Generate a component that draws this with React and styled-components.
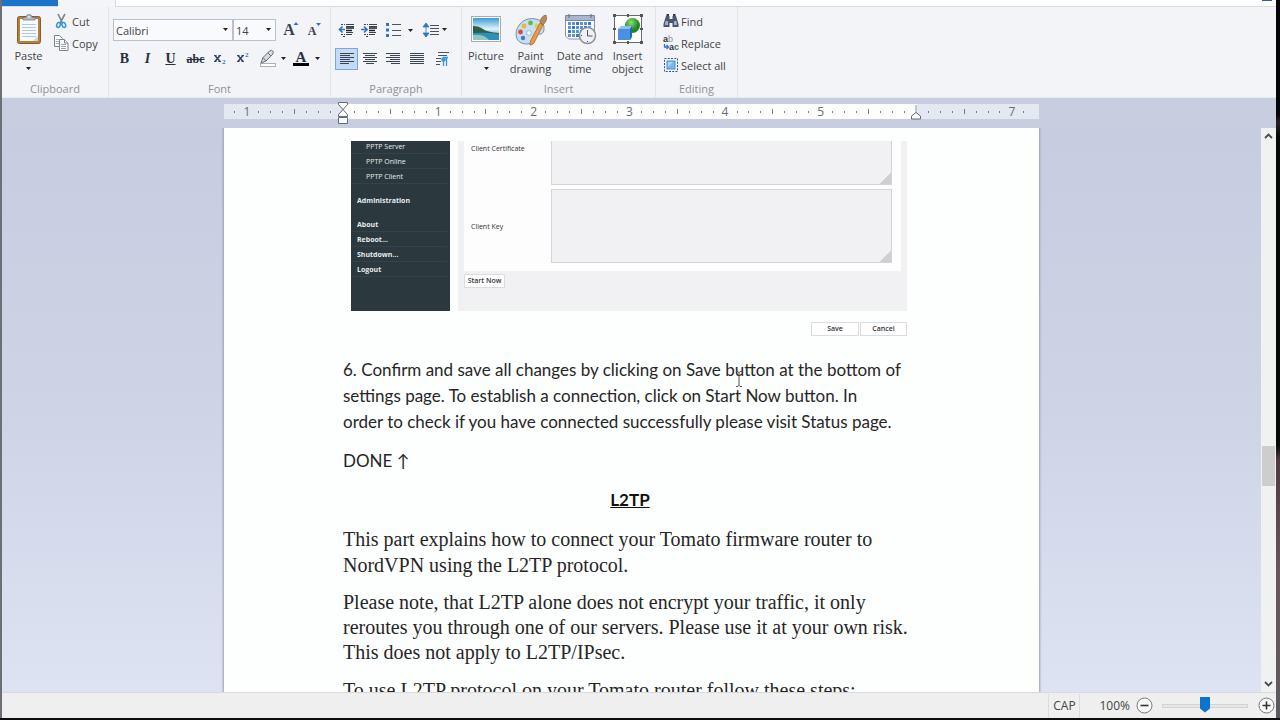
import React from "react";
import styled, { createGlobalStyle, css } from "styled-components";

const GlobalStyle = createGlobalStyle`
  *, *::before, *::after { box-sizing: border-box; }
  body { margin: 0; background: #000; font-family: "Open Sans", "Noto Sans", sans-serif; font-size: 12px; color: #444; }
  button, select, input, textarea { font: inherit; color: inherit; margin: 0; }
  svg { display: block; flex: none; }
`;

/* ---------- window frame ---------- */
const Desktop = styled.div`
  display: flex;
  height: 100vh;
  min-height: 480px;
  padding-bottom: 2px;
  background: #0b0c0e;
  overflow: hidden;
`;
const Window = styled.div`
  flex: 1;
  min-width: 0;
  display: flex;
  flex-direction: column;
  border-left: 2px solid #6b6f76;
  background: #f3f4f8;
`;
const EdgeStrip = styled.div`
  width: 4px;
  background: linear-gradient(#050607 0 16%, #2b2023 17%, #070809 19% 62%, #4d3b40 64%, #6a565c 80%, #5c5a60 100%);
`;

/* ---------- ribbon ---------- */
const TabStrip = styled.div`
  display: flex;
  height: 7px;
  background: #fcfdfe;
  border-bottom: 1px solid #dadbdc;
`;
const FileTab = styled.div`
  width: 56px;
  height: 6px;
  background: #1c74c8;
`;
const ActiveTab = styled.div`
  width: 58px;
  height: 7px;
  background: #f4f5f9;
  border-right: 1px solid #dadbdc;
`;
const HelpDot = styled.div`
  width: 10px;
  height: 1px;
  margin: 0 4px 0 auto;
  background: #3a5a9c;
`;
const RibbonBar = styled.div`
  display: flex;
  height: 91px;
  background: #f3f4f8;
  border-bottom: 1px solid #e7eaf3;
`;
const Group = styled.section`
  display: flex;
  flex-direction: column;
  width: ${(p) => p.$w}px;
  border-right: 1px solid #e1e3e8;
`;
const GroupBody = styled.div`
  display: flex;
  height: 74px;
  padding-left: ${(p) => p.$pad || 0}px;
`;
const Caption = styled.div`
  height: 16px;
  line-height: 16px;
  text-align: center;
  font-size: 11px;
  color: #8f9196;
`;
const LargeButton = styled.button`
  display: flex;
  flex-direction: column;
  align-items: center;
  width: ${(p) => p.$w}px;
  padding: 7px 0 0;
  border: 0;
  background: none;
  font-size: 11px;
  line-height: 13px;
  white-space: nowrap;
  color: #444;
  > svg:first-child { margin-bottom: 3px; }
`;
const LargeCaret = styled.span`
  display: flex;
  align-items: center;
  height: 13px;
`;
const SmallStack = styled.div`
  display: flex;
  flex-direction: column;
  padding: 3px 0 0 ${(p) => p.$pad || 0}px;
`;
const SmallButton = styled.button`
  display: flex;
  align-items: center;
  gap: 2px;
  height: 22px;
  padding: 0;
  border: 0;
  background: none;
  font-size: 11px;
  color: #444;
  white-space: nowrap;
`;
const ToolRows = styled.div`
  display: flex;
  flex-direction: column;
  gap: 7px;
  padding-top: 12px;
`;
const ToolRow = styled.div`
  display: flex;
  height: 22px;
`;
const ToolButton = styled.button`
  display: flex;
  align-items: center;
  justify-content: center;
  width: ${(p) => p.$w || 23}px;
  height: 22px;
  padding: 0;
  border: 1px solid transparent;
  background: none;
  color: #2a2f3a;
  font-family: "Liberation Serif", serif;
  font-size: ${(p) => p.$size || 14}px;
  font-weight: ${(p) => (p.$bold ? 700 : 400)};
  font-style: ${(p) => (p.$italic ? "italic" : "normal")};
  text-decoration: ${(p) => p.$line || "none"};
  ${(p) => p.$active && css`
    border-color: #7ba7dc;
    background: #c4dbf5;
  `}
`;
const Combo = styled.div`
  position: relative;
  display: flex;
  width: ${(p) => p.$w}px;
  height: 22px;
  margin-right: ${(p) => p.$after || 0}px;
  svg { position: absolute; right: 5px; top: 9px; pointer-events: none; }
`;
const ComboSelect = styled.select`
  appearance: none;
  width: 100%;
  height: 22px;
  padding: 0 2px;
  border: 1px solid #bcc0ca;
  border-radius: 0;
  background: #f9fafc;
  font-size: 11px;
  color: #444;
`;

/* ---------- ruler ---------- */
const RulerBar = styled.div`
  display: flex;
  justify-content: center;
  flex: none;
  height: 30px;
  padding: 6px 15px 0 0;
  background: #c8cde0;
`;
const Ruler = styled.div`
  display: flex;
  width: 815px;
  height: 15px;
  padding: 0 9px 0 5px;
  background: linear-gradient(90deg, #e4e8f3 119px, #fdfdfe 119px 693px, #e4e8f3 693px);
`;
const RulerCell = styled.div`
  position: relative;
  flex: 1;
  display: flex;
  align-items: center;
  justify-content: center;
  height: 15px;
  font-size: 12px;
  line-height: 15px;
  color: #6a6d78;
  svg { position: absolute; left: 0; }
`;
const Tick = styled.span`
  width: 1px;
  height: ${(p) => (p.$tall ? 5 : 2)}px;
  background: #777b88;
`;

/* ---------- document area ---------- */
const Workspace = styled.div`
  flex: 1;
  min-height: 0;
  display: flex;
`;
const Canvas = styled.main`
  flex: 1;
  min-width: 0;
  display: flex;
  justify-content: center;
  align-items: stretch;
  overflow: hidden;
  background: linear-gradient(#c7cde0, #cdd4e6 50%, #dde3f2);
`;
const Page = styled.article`
  position: relative;
  width: 815px;
  min-height: 100%;
  padding: 13px 0 0 119px;
  background: #fdfefe;
  box-shadow: 0 0 2px 1px #97a1b5;
  color: #262626;
`;
const Paragraph = styled.p`
  margin: 0 0 ${(p) => p.$after || 13}px;
  font-family: Lato, "Open Sans", sans-serif;
  font-size: 17px;
  line-height: 26px;
  white-space: nowrap;
`;
const Heading = styled.h2`
  width: 574px;
  margin: 0 0 13px;
  text-align: center;
  font-family: Lato, "Open Sans", sans-serif;
  font-size: 17px;
  line-height: 26px;
  font-weight: 700;
  text-decoration: underline;
  color: #111;
`;
const SerifParagraph = styled(Paragraph)`
  font-family: "Liberation Serif", serif;
  font-size: 20px;
  line-height: ${(p) => p.$lh || 26}px;
`;
const TextCursor = styled.svg`
  position: absolute;
  left: 511px;
  top: 243px;
`;

/* ---------- embedded router page ---------- */
const Figure = styled.figure`
  width: 556px;
  height: 196px;
  margin: 0 0 20px 8px;
  font-size: 7px;
`;
const FigureTop = styled.div`
  display: flex;
  gap: 8px;
  height: 170px;
`;
const RouterMenu = styled.nav`
  width: 99px;
  height: 170px;
  overflow: hidden;
  background: #2b393f;
`;
const MenuList = styled.ul`
  list-style: none;
  margin: -2px 3px 9px 0;
  padding: 0;
  & + & { margin-top: 0; }
`;
const MenuItem = styled.li`
  height: 15px;
  line-height: 15px;
  padding-left: ${(p) => (p.$sub ? 15 : 6)}px;
  border-bottom: 1px solid ${(p) => (p.$plain ? "transparent" : "#34434a")};
`;
const MenuLink = styled.a`
  display: block;
  color: #e6ebed;
  text-decoration: none;
  font-weight: ${(p) => (p.$bold ? 700 : 400)};
`;
const RouterMain = styled.div`
  flex: 1;
  background: #f1f1f3;
  padding: 0 6px;
`;
const RouterForm = styled.div`
  display: flex;
  flex-direction: column;
  gap: 4px;
  height: 130px;
  padding: 0 9px 0 7px;
  background: #fdfdfe;
`;
const Field = styled.div`
  display: flex;
  height: ${(p) => p.$h}px;
  align-items: ${(p) => (p.$top ? "flex-start" : "center")};
  color: #333;
  label { width: 80px; line-height: 15px; white-space: nowrap; }
  textarea {
    flex: 1;
    height: 100%;
    border: 1px solid #d4d4d7;
    border-top-width: ${(p) => (p.$top ? 0 : 1)}px;
    background: #f1f1f3;
    padding: 2px;
    resize: vertical;
  }
  textarea::-webkit-resizer {
    background:
      linear-gradient(135deg, transparent 60%, #f1f1f3 60%),
      repeating-linear-gradient(90deg, #c4c4c8 0 1px, transparent 1px 3px);
    background: linear-gradient(135deg, transparent 62%, #cfcfd3 62%);
  }
`;
const RouterButton = styled.button`
  width: ${(p) => p.$w}px;
  height: 14px;
  padding: 0;
  border: 1px solid #dcdce0;
  background: #fff;
  color: #333;
  font-size: 7px;
  font-weight: 600;
  line-height: 12px;
  white-space: nowrap;
`;
const StartRow = styled.div`
  padding-top: 3px;
`;
const SaveRow = styled.div`
  display: flex;
  justify-content: flex-end;
  gap: 1px;
  padding-top: 11px;
`;

/* ---------- scroll bar ---------- */
const ScrollBar = styled.div`
  display: flex;
  flex-direction: column;
  width: 15px;
  background: #f0f1f1;
`;
const ScrollButton = styled.button`
  display: flex;
  align-items: center;
  justify-content: center;
  height: 16px;
  padding: 0;
  border: 0;
  background: none;
`;
const ScrollGap = styled.div`
  flex: ${(p) => p.$grow};
`;
const ScrollThumb = styled.div`
  height: 40px;
  margin: 0 1px;
  background: #cdcdcd;
`;

/* ---------- status bar ---------- */
const StatusBar = styled.footer`
  display: flex;
  align-items: center;
  justify-content: flex-end;
  flex: none;
  height: 26px;
  padding-right: 1px;
  border-top: 1px solid #d7dadd;
  background: #efefef;
`;
const CapsCell = styled.div`
  width: 32px;
  height: 24px;
  line-height: 24px;
  margin-right: 19px;
  text-align: center;
  border: solid #dcdcdc;
  border-width: 0 1px;
`;
const Zoom = styled.label`
  margin-right: 6px;
`;
const RoundButton = styled.button`
  display: flex;
  padding: 0;
  border: 0;
  background: none;
`;
const ZoomSlider = styled.input`
  appearance: none;
  width: 86px;
  height: 17px;
  margin: 0 10px 0 9px;
  background: none;
  &::-webkit-slider-runnable-track {
    height: 4px;
    border: 1px solid #d3d3d3;
    background: #e7e7e7;
  }
  &::-webkit-slider-thumb {
    appearance: none;
    width: 10px;
    height: 16px;
    margin-top: -8px;
    background: #0b74d1;
    clip-path: polygon(0 0, 100% 0, 100% 75%, 50% 100%, 0 75%);
  }
`;

/* ---------- drawings ---------- */
const Caret = () => (
  <svg width="5" height="3" viewBox="0 0 5 3"><path d="M0 0h5L2.5 3z" fill="#222" /></svg>
);
const PasteIcon = () => (
  <svg width="26" height="32" viewBox="0 0 26 32">
    <rect x="1.500" y="2.500" width="23" height="27" rx="2" fill="#b5803c" stroke="#8a5c25" />
    <rect x="4" y="5" width="18" height="22" fill="#f7faff" />
    <path d="M6 10.500h14M6 13.500h14M6 16.500h14M6 19.500h14M6 22.500h14" stroke="#b3c8e3" />
    <path d="M22 22v5h-5z" fill="#cdd7e6" />
    <path d="M7 6V3.500h3Q10 .5 13 .5t3 3h3V6z" fill="#b4bac2" stroke="#767d88" strokeWidth=".8" />
    <circle cx="13" cy="3" r="1" fill="#eef1f5" />
  </svg>
);
const CutIcon = () => (
  <svg width="17" height="16" viewBox="0 0 17 16" fill="none">
    <path d="M5 1l4.500 9M12 1L7 10" stroke="#7a828e" strokeWidth="1.600" />
    <ellipse cx="5.500" cy="12" rx="1.800" ry="2.500" stroke="#2e93d8" strokeWidth="1.500" transform="rotate(20 5.500 12)" />
    <ellipse cx="10.800" cy="12" rx="1.800" ry="2.500" stroke="#2e93d8" strokeWidth="1.500" transform="rotate(-20 10.800 12)" />
  </svg>
);
const CopyIcon = () => (
  <svg width="17" height="16" viewBox="0 0 17 16" fill="#fbfcfe" stroke="#7d8490">
    <path d="M1.500.5h5l3 3v8h-8z" />
    <path d="M3 4.500h3M3 6.500h3M3 8.500h3" stroke="#a9b0bb" />
    <path d="M6.500 4.500h5l3.500 3.500v7.500H6.500z" />
    <path d="M11.500 4.500v3.500H15" />
    <path d="M8 9.500h5M8 11.500h5M8 13.500h5" stroke="#98a3b3" />
  </svg>
);
const PenIcon = () => (
  <svg width="33" height="20" viewBox="0 0 33 20">
    <rect x="4.500" y="14.500" width="15" height="3" fill="#fff" stroke="#aeb2b8" />
    <path d="M5 14l2-5.500 6.500-6.500q2-1.500 3.200 0t0 3.200L10 12z" fill="#d7dade" stroke="#686e78" />
    <path d="M7 8.500l3 3.500M12 4l3 3" stroke="#686e78" fill="none" />
    <path d="M25 8h5l-2.500 3z" fill="#222" />
  </svg>
);
const FontColorMark = () => (
  <svg width="33" height="20" viewBox="0 0 33 20">
    <text x="10" y="13" textAnchor="middle" fontFamily="Liberation Serif" fontWeight="700" fontSize="15" fill="#2d3342">A</text>
    <rect x="2" y="14" width="16" height="3" fill="#000" />
    <path d="M24 8h5l-2.500 3z" fill="#222" />
  </svg>
);
const ResizeFont = ({ up }) => (
  <svg width="20" height="20" viewBox="0 0 20 20">
    <text x="8" y="15" textAnchor="middle" fontFamily="Liberation Serif" fontWeight="700" fontSize={up ? 16 : 12} fill="#3a404e">A</text>
    <path d={up ? "M12.500 5h5L15 2z" : "M12 3h5l-2.500 3z"} fill="#2f75c4" />
  </svg>
);
const ScriptMark = ({ sup }) => (
  <svg width="18" height="20" viewBox="0 0 18 20" fontFamily="Liberation Serif" fontWeight="700">
    <path d="M2 6.500h2.500M6.500 6.500H9M2 12.500h2.500M6.500 12.500H9" stroke="#34466c" />
    <path d="M3 6.500l5 6M8 6.500l-5 6" stroke="#34466c" strokeWidth="1.600" />
    <text x="10" y={sup ? 8 : 15} fontSize="7" fill="#2f75c4">2</text>
  </svg>
);
const LINE_SETS = {
  left: [[1, 15], [1, 11], [1, 15], [1, 11], [1, 15], [1, 10]],
  center: [[1, 15], [3, 13], [1, 15], [3, 13], [1, 15], [4, 12]],
  right: [[1, 15], [5, 15], [1, 15], [5, 15], [1, 15], [6, 15]],
  justify: [[1, 15], [1, 15], [1, 15], [1, 15], [1, 15], [1, 15]],
};
const AlignIcon = ({ kind }) => (
  <svg width="16" height="14" viewBox="0 0 16 14" stroke="#3b4250">
    {LINE_SETS[kind].map(([a, b], i) => <path key={i} d={`M${a} ${i * 2 + 1.5}H${b}`} />)}
  </svg>
);
const IndentIcon = ({ out }) => (
  <svg width="17" height="14" viewBox="0 0 17 14" fill="none">
    <path d="M3 1.500h4M8 1.500h8M3 11.500h4M8 11.500h6M5 13.500h2" stroke="#3b4250" strokeDasharray="2 1" />
    <path d="M8 1.500h8M8 3.500h8M8 9.500h7M8 11.500h6" stroke="#3b4250" />
    <path d="M8 5h8M8 7.500h6" stroke="#1a1f2a" strokeWidth="1.600" />
    <path d={out ? "M7 6.500H2M4.500 3.500l-3 3 3 3" : "M0 6.500h6M3 3.500l3 3-3 3"} stroke="#2f75c4" strokeWidth="1.700" />
  </svg>
);
const BulletsIcon = () => (
  <svg width="31" height="16" viewBox="0 0 31 16">
    <path d="M2 1h3v3H2zM2 6.500h3v3H2zM2 12h3v3H2z" fill="#2f75c4" />
    <path d="M8 2.500h9M8 8.500h9M8 13.500h9" stroke="#4c5360" />
    <path d="M24 7h5l-2.500 3z" fill="#222" />
  </svg>
);
const SpacingIcon = () => (
  <svg width="26" height="16" viewBox="0 0 26 16">
    <path d="M4 2v12M1 5l3-4 3 4zM1 11l3 4 3-4z" stroke="#2f75c4" fill="#2f75c4" strokeWidth=".8" />
    <path d="M8 3.500h9M8 6.500h9M8 9.500h9M8 12.500h9" stroke="#4c5360" />
    <path d="M20 6h5l-2.500 3z" fill="#222" />
  </svg>
);
const ParagraphIcon = () => (
  <svg width="16" height="16" viewBox="0 0 16 16">
    <path d="M4 1.500h11M4 4.500h9M2 7.500h5M2 10.500h5M2 13.500h4" stroke="#4c5360" />
    <path d="M9.500 15V6.500H14M12.500 15V6.500" stroke="#3b97de" fill="none" strokeWidth="1.300" />
    <circle cx="9.500" cy="8.500" r="2.300" fill="#3b97de" />
  </svg>
);
const PictureIcon = () => (
  <svg width="32" height="32" viewBox="0 0 32 32">
    <defs>
      <linearGradient id="sky" x1="0" y1="0" x2="0" y2="1">
        <stop offset="0" stopColor="#3d9bd8" /><stop offset=".5" stopColor="#dff3f4" /><stop offset="1" stopColor="#2f93bd" />
      </linearGradient>
    </defs>
    <rect x="1.500" y="2.500" width="29" height="25" fill="#fff" stroke="#a4acb8" />
    <rect x="3" y="4" width="26" height="22" fill="url(#sky)" />
    <path d="M3 12q6 0 10 3t16 4v1H3z" fill="#2b5f4c" />
    <path d="M3 19q13-1 26 1v6H3z" fill="#2f8fb8" />
    <path d="M3 21q11-1 16 5H3z" fill="#8cc9b8" />
  </svg>
);
const PaletteIcon = () => (
  <svg width="34" height="32" viewBox="0 0 34 32">
    <path d="M3 25Q0 17 6 10t16-5q9 2 8 11-1 5-6 4-5 0-5 4 1 6-6 6-7 0-10-5z" fill="#c7dff0" stroke="#7492ad" />
    <circle cx="6.500" cy="18" r="2.400" fill="#d84b45" />
    <circle cx="10" cy="12" r="2.400" fill="#efb43b" />
    <circle cx="16.500" cy="9" r="2.400" fill="#68b84e" />
    <circle cx="23" cy="12" r="2.400" fill="#e0cd55" />
    <circle cx="9" cy="24" r="2.200" fill="#4479ca" />
    <circle cx="15" cy="19" r="2.400" fill="#fafcff" stroke="#7492ad" strokeWidth=".6" />
    <path d="M26 9l3 2-9 18q-2 2-4 2 0-3 1-5z" fill="#ed9a45" stroke="#ad6523" strokeWidth=".8" />
    <path d="M26 8q1-6 6-7 2 5-3 10z" fill="#b98a57" stroke="#866039" strokeWidth=".7" />
  </svg>
);
const CalendarIcon = () => (
  <svg width="34" height="32" viewBox="0 0 34 32">
    <path d="M2.500 2.500h29V25h-26l-3-3z" fill="#fcfdff" stroke="#8795ab" />
    <path d="M2.500 1.500h29v5h-29z" fill="#a8b7ce" stroke="#7788a2" />
    <path d="M6 0v4M28 0v4" stroke="#5a6880" />
    {[8, 12, 16, 20].map((y) => [5, 9, 13, 17, 21, 25].map((x) => (
      <rect key={`${x}-${y}`} x={x} y={y} width="3" height="3" fill={(x + y) % 3 ? "#5e92dc" : "#3f74c7"} />
    )))}
    <circle cx="24.500" cy="21.500" r="8" fill="#eef1f4" stroke="#8b9098" strokeWidth="1.500" />
    <path d="M24.500 16v6h5" stroke="#4d535d" fill="none" />
    <path d="M24.500 27v1M18 21.500h1" stroke="#4d535d" />
  </svg>
);
const ObjectIcon = () => (
  <svg width="32" height="32" viewBox="0 0 32 32">
    <defs>
      <radialGradient id="ball" cx=".4" cy=".3"><stop offset="0" stopColor="#8fe06c" /><stop offset="1" stopColor="#1c8a29" /></radialGradient>
    </defs>
    <rect x="2.500" y="1.500" width="27" height="27" fill="#fff" stroke="#6b6b6b" />
    <path d="M1 0h3v3H1zM15 0h2v3h-2zM28 0h3v3h-3zM1 14h3v2H1zM28 14h3v2h-3zM1 27h3v3H1zM15 27h2v3h-2zM28 27h3v3h-3z" fill="#555" />
    <circle cx="20.500" cy="11.500" r="7.500" fill="url(#ball)" />
    <path d="M6 15l3-3h11l-2 3z" fill="#8ebff3" />
    <path d="M6 15h12v11H6z" fill="#4a90e0" />
    <path d="M18 15l2-3v11l-2 3z" fill="#2765b5" />
  </svg>
);
const FindIcon = () => (
  <svg width="16" height="16" viewBox="0 0 16 16">
    <path d="M3 3h3.500v3h3V3H13l2.500 8v3H9.500v-4h-3v4H.5v-3z" fill="#4a566e" />
    <path d="M3.500 1h2.500v2H3.500zM10 1h2.500v2H10z" fill="#2f3a50" />
    <path d="M2.500 8h2.500v4H2zM11 8h2.500l.500 4h-3z" fill="#a3b3cf" />
  </svg>
);
const ReplaceIcon = () => (
  <svg width="16" height="16" viewBox="0 0 16 16" fontFamily="Liberation Sans" fontWeight="700">
    <text x="0" y="7" fontSize="9" fill="#2e3542">a<tspan fill="#8d939e" fontWeight="400">b</tspan></text>
    <text x="6" y="15" fontSize="9" fill="#2e3542">a<tspan fill="#3c7f4e">c</tspan></text>
    <path d="M1.500 9v3H5M3.500 10l2 2-2 2" stroke="#2f75c4" fill="none" strokeWidth="1.300" />
  </svg>
);
const SelectAllIcon = () => (
  <svg width="16" height="16" viewBox="0 0 16 16">
    <rect x="1.500" y="1.500" width="13" height="13" fill="none" stroke="#31598f" strokeDasharray="2 1.250" />
    <rect x="4" y="4" width="8" height="8" fill="#7fb6ea" stroke="#4f8fd0" />
    <path d="M5 5h5l-5 5z" fill="#b4d8f7" />
  </svg>
);
const Chevron = ({ down }) => (
  <svg width="9" height="6" viewBox="0 0 9 6">
    <path d={down ? "M1 1l3.500 3.500L8 1" : "M1 5l3.500-3.500L8 5"} fill="none" stroke="#474b50" strokeWidth="1.800" />
  </svg>
);
const RoundMark = ({ plus }) => (
  <svg width="17" height="17" viewBox="0 0 17 17" fill="none">
    <circle cx="8.500" cy="8.500" r="7.500" fill="#fafafa" stroke="#777" />
    <path d={plus ? "M4.500 8.500h8M8.500 4.500v8" : "M4.500 8.500h8"} stroke="#333" strokeWidth="1.600" />
  </svg>
);
const IndentMarker = () => (
  <svg width="12" height="24" viewBox="0 0 12 24" style={{ top: -3 }}>
    <path d="M1.500 1.500h9v2L6 8.500l4.500 5v2h-9v-2L6 8.500l-4.500-5z" fill="#fbfcfe" stroke="#666b78" />
    <path d="M1.500 16.500h9v6h-9z" fill="#fbfcfe" stroke="#666b78" />
  </svg>
);
const RightMarker = () => (
  <svg width="12" height="15" viewBox="0 0 12 15" style={{ top: 1 }}>
    <path d="M6 0v8" stroke="#8b90a0" />
    <path d="M1.500 14v-3L6 7.500l4.500 3.500v3z" fill="#fbfcfe" stroke="#666b78" />
  </svg>
);

/* eighths of an inch, counted from the left margin */
const EIGHTHS = Array.from({ length: 67 }, (_, i) => i - 9);
const rulerMark = (n) => {
  if (n === 0) return <IndentMarker />;
  if (n === 48) return <RightMarker />;
  if (n % 8 === 0) return Math.abs(n / 8);
  return <Tick $tall={n % 4 === 0} />;
};

export default function App() {
  return (
    <>
      <GlobalStyle />
      <Desktop>
        <Window>
          <TabStrip>
            <FileTab />
            <ActiveTab />
            <HelpDot />
          </TabStrip>
          <RibbonBar>
            <Group $w={107}>
              <GroupBody $pad={8}>
                <LargeButton $w={37}><PasteIcon />Paste<LargeCaret><Caret /></LargeCaret></LargeButton>
                <SmallStack $pad={6}>
                  <SmallButton><CutIcon />Cut</SmallButton>
                  <SmallButton><CopyIcon />Copy</SmallButton>
                </SmallStack>
              </GroupBody>
              <Caption>Clipboard</Caption>
            </Group>
            <Group $w={222}>
              <GroupBody $pad={4}>
                <ToolRows>
                  <ToolRow>
                    <Combo $w={120}>
                      <ComboSelect aria-label="Font family" defaultValue="Calibri"><option>Calibri</option></ComboSelect>
                      <Caret />
                    </Combo>
                    <Combo $w={43} $after={3}>
                      <ComboSelect aria-label="Font size" defaultValue="14"><option>14</option></ComboSelect>
                      <Caret />
                    </Combo>
                    <ToolButton aria-label="Grow font"><ResizeFont up /></ToolButton>
                    <ToolButton aria-label="Shrink font"><ResizeFont /></ToolButton>
                  </ToolRow>
                  <ToolRow>
                    <ToolButton $bold>B</ToolButton>
                    <ToolButton $bold $italic>I</ToolButton>
                    <ToolButton $bold $line="underline">U</ToolButton>
                    <ToolButton $w={27} $size={12} $bold $line="line-through">abc</ToolButton>
                    <ToolButton aria-label="Subscript"><ScriptMark /></ToolButton>
                    <ToolButton aria-label="Superscript"><ScriptMark sup /></ToolButton>
                    <ToolButton $w={35} aria-label="Highlight"><PenIcon /></ToolButton>
                    <ToolButton $w={35} aria-label="Font color"><FontColorMark /></ToolButton>
                  </ToolRow>
                </ToolRows>
              </GroupBody>
              <Caption>Font</Caption>
            </Group>
            <Group $w={131}>
              <GroupBody $pad={4}>
                <ToolRows>
                  <ToolRow>
                    <ToolButton aria-label="Decrease indent"><IndentIcon out /></ToolButton>
                    <ToolButton aria-label="Increase indent"><IndentIcon /></ToolButton>
                    <ToolButton $w={36} aria-label="Bullets"><BulletsIcon /></ToolButton>
                    <ToolButton $w={36} aria-label="Line spacing"><SpacingIcon /></ToolButton>
                  </ToolRow>
                  <ToolRow>
                    <ToolButton $active aria-label="Align left"><AlignIcon kind="left" /></ToolButton>
                    <ToolButton aria-label="Center"><AlignIcon kind="center" /></ToolButton>
                    <ToolButton $w={24} aria-label="Align right"><AlignIcon kind="right" /></ToolButton>
                    <ToolButton aria-label="Justify"><AlignIcon kind="justify" /></ToolButton>
                    <ToolButton $w={28} aria-label="Paragraph"><ParagraphIcon /></ToolButton>
                  </ToolRow>
                </ToolRows>
              </GroupBody>
              <Caption>Paragraph</Caption>
            </Group>
            <Group $w={194}>
              <GroupBody $pad={2}>
                <LargeButton $w={44}><PictureIcon />Picture<LargeCaret><Caret /></LargeCaret></LargeButton>
                <LargeButton $w={45}><PaletteIcon />Paint<span>drawing</span></LargeButton>
                <LargeButton $w={54}><CalendarIcon />Date and<span>time</span></LargeButton>
                <LargeButton $w={41}><ObjectIcon />Insert<span>object</span></LargeButton>
              </GroupBody>
              <Caption>Insert</Caption>
            </Group>
            <Group $w={82}>
              <GroupBody $pad={7}>
                <SmallStack>
                  <SmallButton><FindIcon />Find</SmallButton>
                  <SmallButton><ReplaceIcon />Replace</SmallButton>
                  <SmallButton><SelectAllIcon />Select all</SmallButton>
                </SmallStack>
              </GroupBody>
              <Caption>Editing</Caption>
            </Group>
          </RibbonBar>

          <RulerBar>
            <Ruler>
              {EIGHTHS.map((n) => <RulerCell key={n}>{rulerMark(n)}</RulerCell>)}
            </Ruler>
          </RulerBar>

          <Workspace>
            <Canvas>
              <Page>
                <Figure>
                  <FigureTop>
                    <RouterMenu>
                      <MenuList>
                        {["PPTP Server", "PPTP Online", "PPTP Client"].map((t) => (
                          <MenuItem key={t} $sub><MenuLink href="#">{t}</MenuLink></MenuItem>
                        ))}
                      </MenuList>
                      <MenuList>
                        <MenuItem $plain><MenuLink href="#" $bold>Administration</MenuLink></MenuItem>
                      </MenuList>
                      <MenuList>
                        {["About", "Reboot...", "Shutdown...", "Logout"].map((t) => (
                          <MenuItem key={t}><MenuLink href="#" $bold>{t}</MenuLink></MenuItem>
                        ))}
                      </MenuList>
                    </RouterMenu>
                    <RouterMain>
                      <RouterForm>
                        <Field $h={44} $top><label htmlFor="cert">Client Certificate</label><textarea id="cert" /></Field>
                        <Field $h={74}><label htmlFor="key">Client Key</label><textarea id="key" /></Field>
                      </RouterForm>
                      <StartRow><RouterButton $w={41}>Start Now</RouterButton></StartRow>
                    </RouterMain>
                  </FigureTop>
                  <SaveRow>
                    <RouterButton $w={48}>Save</RouterButton>
                    <RouterButton $w={47}>Cancel</RouterButton>
                  </SaveRow>
                </Figure>

                <Paragraph>
                  6. Confirm and save all changes by clicking on Save button at the bottom of<br />
                  settings page. To establish a connection, click on Start Now button. In<br />
                  order to check if you have connected successfully please visit Status page.
                </Paragraph>
                <Paragraph>DONE ↑</Paragraph>
                <Heading>L2TP</Heading>
                <SerifParagraph $after={12}>
                  This part explains how to connect your Tomato firmware router to<br />
                  NordVPN using the L2TP protocol.
                </SerifParagraph>
                <SerifParagraph $lh={25}>
                  Please note, that L2TP alone does not encrypt your traffic, it only<br />
                  reroutes you through one of our servers. Please use it at your own risk.<br />
                  This does not apply to L2TP/IPsec.
                </SerifParagraph>
                <SerifParagraph $lh={25}>To use L2TP protocol on your Tomato router follow these steps:</SerifParagraph>

                <TextCursor width="8" height="16" viewBox="0 0 8 16" fill="none" stroke="#555">
                  <path d="M1 .500h2l1 1 1-1h2M4 1v14M1 15.500h2l1-1 1 1h2" />
                </TextCursor>
              </Page>
            </Canvas>
            <ScrollBar>
              <ScrollButton aria-label="Scroll up"><Chevron /></ScrollButton>
              <ScrollGap $grow={302} />
              <ScrollThumb />
              <ScrollGap $grow={190} />
              <ScrollButton aria-label="Scroll down"><Chevron down /></ScrollButton>
            </ScrollBar>
          </Workspace>

          <StatusBar>
            <CapsCell>CAP</CapsCell>
            <Zoom htmlFor="zoom">100%</Zoom>
            <RoundButton aria-label="Zoom out"><RoundMark /></RoundButton>
            <ZoomSlider id="zoom" type="range" min="0" max="100" defaultValue="50" />
            <RoundButton aria-label="Zoom in"><RoundMark plus /></RoundButton>
          </StatusBar>
        </Window>
        <EdgeStrip />
      </Desktop>
    </>
  );
}
